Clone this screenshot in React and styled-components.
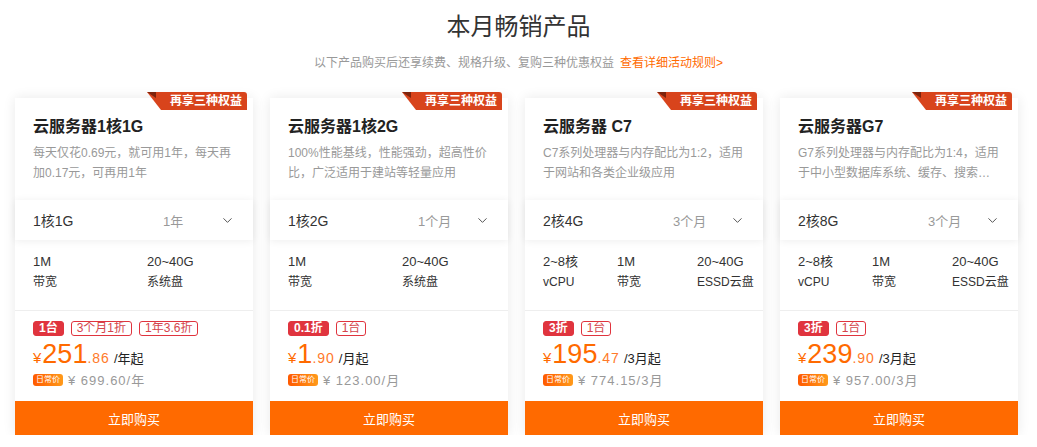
import React from 'react';
import styled, { createGlobalStyle } from 'styled-components';
import { ChevronDown } from 'lucide-react';

const GlobalStyle = createGlobalStyle`
	body {
		margin: 0;
		background: #fff;
		font-family: "Liberation Sans", "Noto Sans CJK SC", sans-serif;
		color: #333;
	}
`;

const Page = styled.div`
	width: 1037px;
	padding-top: 11px;
`;

const Heading = styled.h2`
	margin: 0;
	font-size: 24px;
	line-height: 32px;
	font-weight: 400;
	text-align: center;
	color: #333;
`;

const Subtitle = styled.p`
	margin: 10px 0 0;
	font-size: 12px;
	line-height: 20px;
	text-align: center;
	color: #999;

	a {
		color: #ff6a00;
		margin-left: 6px;
		text-decoration: none;
	}
`;

const Grid = styled.div`
	display: grid;
	grid-template-columns: repeat(4, 238px);
	gap: 17px;
	padding: 25px 0 0 15px;
`;

const Card = styled.div`
	position: relative;
	display: flex;
	flex-direction: column;
	background: #fff;
	box-shadow: 0 0 12px rgba(0, 0, 0, 0.09);
`;

const Ribbon = styled.div`
	position: absolute;
	top: -6px;
	right: 6px;
	height: 18px;
	width: 100px;
	box-sizing: border-box;
	padding-left: 23px;
	font-size: 12px;
	font-weight: 700;
	line-height: 18px;
	color: #fff;
	background: #d8441c;
	border-radius: 0 3px 0 0;
	clip-path: polygon(0 0, 100% 0, 100% 100%, 14px 100%);

	&::before {
		content: '';
		position: absolute;
		left: 0;
		top: 0;
		width: 9px;
		height: 6px;
		background: #7d230c;
		clip-path: polygon(0 0, 100% 0, 100% 100%);
	}
`;

const Top = styled.div`
	padding: 18px 18px 0;
	height: 67px;
`;

const Title = styled.h3`
	margin: 0;
	font-size: 16px;
	line-height: 22px;
	font-weight: 700;
	color: #222;
`;

const Desc = styled.p`
	margin: 5px 0 0;
	font-size: 12px;
	line-height: 20px;
	color: #999;
	display: -webkit-box;
	-webkit-line-clamp: 2;
	-webkit-box-orient: vertical;
	overflow: hidden;
`;

const Select = styled.div`
	display: flex;
	align-items: center;
	height: 40px;
	margin-top: 17px;
	padding: 0 18px;
	background: #fff;
	box-shadow: 0 1px 8px rgba(0, 0, 0, 0.07);
	font-size: 14px;
`;

const Spec = styled.span`
	width: 130px;
	color: #333;
`;

const Period = styled.span`
	flex: 1;
	font-size: 13px;
	color: #999;
`;

const Specs = styled.div`
	display: grid;
	grid-template-columns: ${p => p.$cols};
	padding: 11px 18px 17px;
	border-bottom: 1px solid #eee;
	font-size: 13px;
	line-height: 21px;
	color: #333;
	white-space: nowrap;

	small {
		display: block;
		font-size: 12px;
	}
`;

const Value = styled.div`
	font-size: 13px;
`;

const Pricing = styled.div`
	padding: 10px 18px 0;
	height: 80px;
`;

const Tags = styled.div`
	display: flex;
	gap: 7px;
`;

const Tag = styled.span`
	display: inline-block;
	height: 15px;
	line-height: 13px;
	padding: 0 5px;
	box-sizing: border-box;
	border-radius: 3px;
	font-size: 12px;
	border: 1px solid #e0343e;
	color: ${p => (p.$filled ? '#fff' : '#d4454c')};
	background: ${p => (p.$filled ? '#e0343e' : '#fff')};
	font-weight: ${p => (p.$filled ? 700 : 400)};
`;

const Price = styled.div`
	display: flex;
	align-items: baseline;
	height: 32px;
	color: #ff6a00;
	margin-top: 2px;
`;

const Yen = styled.span`
	font-size: 15px;
	margin-right: 1px;
`;

const Big = styled.span`
	font-size: 27px;
	line-height: 32px;
`;

const Cents = styled.span`
	font-size: 14px;
	letter-spacing: 1px;
	color: #ff7a2a;
`;

const Unit = styled.span`
	font-size: 13px;
	color: #222;
	margin-left: 4px;
`;

const Daily = styled.div`
	display: flex;
	align-items: center;
	gap: 5px;
	font-size: 13px;
	color: #999;
	letter-spacing: 1px;
`;

const DailyTag = styled.span`
	display: inline-block;
	height: 12px;
	line-height: 12px;
	padding: 0 3px;
	border-radius: 3px;
	font-size: 8px;
	letter-spacing: 0;
	color: #fff;
	background: linear-gradient(90deg, #ff5a00, #ff9a1a);
`;

const BuyButton = styled.button`
	height: 34px;
	margin-top: auto;
	border: none;
	background: #ff6a00;
	color: #fff;
	font-family: inherit;
	font-size: 13px;
	cursor: pointer;
`;

const products = [
	{
		title: '云服务器1核1G',
		desc: '每天仅花0.69元，就可用1年，每天再加0.17元，可再用1年',
		spec: '1核1G',
		period: '1年',
		cols: '114px 1fr',
		specs: [['1M', '带宽'], ['20~40G', '系统盘']],
		tags: [['1台', true], ['3个月1折'], ['1年3.6折']],
		price: '251',
		cents: '.86',
		unit: '/年起',
		daily: '¥ 699.60/年',
	},
	{
		title: '云服务器1核2G',
		desc: '100%性能基线，性能强劲，超高性价比，广泛适用于建站等轻量应用',
		spec: '1核2G',
		period: '1个月',
		cols: '114px 1fr',
		specs: [['1M', '带宽'], ['20~40G', '系统盘']],
		tags: [['0.1折', true], ['1台']],
		price: '1',
		cents: '.90',
		unit: '/月起',
		daily: '¥ 123.00/月',
	},
	{
		title: '云服务器 C7',
		desc: 'C7系列处理器与内存配比为1:2，适用于网站和各类企业级应用',
		spec: '2核4G',
		period: '3个月',
		cols: '74px 80px 1fr',
		specs: [['2~8核', 'vCPU'], ['1M', '带宽'], ['20~40G', 'ESSD云盘']],
		tags: [['3折', true], ['1台']],
		price: '195',
		cents: '.47',
		unit: '/3月起',
		daily: '¥ 774.15/3月',
	},
	{
		title: '云服务器G7',
		desc: 'G7系列处理器与内存配比为1:4，适用于中小型数据库系统、缓存、搜索集群等场景',
		spec: '2核8G',
		period: '3个月',
		cols: '74px 80px 1fr',
		specs: [['2~8核', 'vCPU'], ['1M', '带宽'], ['20~40G', 'ESSD云盘']],
		tags: [['3折', true], ['1台']],
		price: '239',
		cents: '.90',
		unit: '/3月起',
		daily: '¥ 957.00/3月',
	},
];

const ProductCard = ({ item }) => (
	<Card>
		<Ribbon>再享三种权益</Ribbon>
		<Top>
			<Title>{item.title}</Title>
			<Desc>{item.desc}</Desc>
		</Top>
		<Select>
			<Spec>{item.spec}</Spec>
			<Period>{item.period}</Period>
			<ChevronDown size={15} strokeWidth={1.6} color="#555" />
		</Select>
		<Specs $cols={item.cols}>
			{item.specs.map(([v, l]) => (
				<div key={l}>
					<Value>{v}</Value>
					<small>{l}</small>
				</div>
			))}
		</Specs>
		<Pricing>
			<Tags>
				{item.tags.map(([t, filled]) => (
					<Tag key={t} $filled={filled}>{t}</Tag>
				))}
			</Tags>
			<Price>
				<Yen>¥</Yen>
				<Big>{item.price}</Big>
				<Cents>{item.cents}</Cents>
				<Unit>{item.unit}</Unit>
			</Price>
			<Daily>
				<DailyTag>日常价</DailyTag>
				{item.daily}
			</Daily>
		</Pricing>
		<BuyButton>立即购买</BuyButton>
	</Card>
);

const App = () => (
	<Page>
		<GlobalStyle />
		<Heading>本月畅销产品</Heading>
		<Subtitle>
			以下产品购买后还享续费、规格升级、复购三种优惠权益
			<a href="#rules">查看详细活动规则&gt;</a>
		</Subtitle>
		<Grid>
			{products.map(p => (
				<ProductCard key={p.title} item={p} />
			))}
		</Grid>
	</Page>
);

export default App;
